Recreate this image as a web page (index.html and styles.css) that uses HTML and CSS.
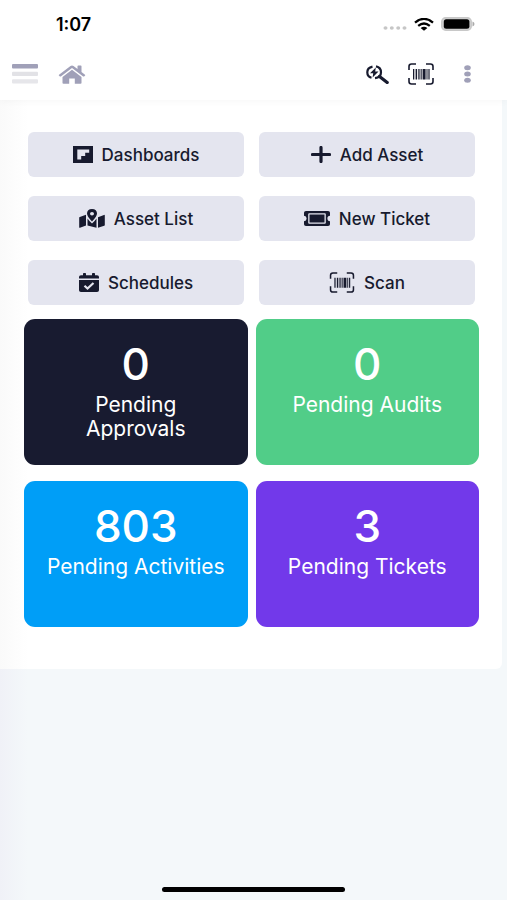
FILE: index.html
```html
<!DOCTYPE html>
<html lang="en">
<head>
<meta charset="utf-8">
<meta name="viewport" content="width=device-width, initial-scale=1">
<title>Home</title>
<link rel="stylesheet" href="styles.css">
</head>
<body>
<svg class="sprite" aria-hidden="true">
  <symbol id="barcode" viewBox="0 0 26 22">
    <path d="M1 7V3.500Q1 1 3.500 1H8M18 1h4.500Q25 1 25 3.500V7M25 15v3.500Q25 21 22.500 21H18M8 21H3.500Q1 21 1 18.500V15" fill="none" stroke="currentColor" stroke-width="1.600"/>
    <path d="M5 6h1.300v10.500H5zM7.600 6h1.500v10.500H7.600zM10.300 6h1.300v10.500h-1.300zM12.600 6h1.100v10.500h-1.100zM14.600 6h3v10.500h-3zM18.500 6h1v10.500h-1zM20.400 6h1.200v10.500h-1.200z" fill="currentColor"/>
  </symbol>
</svg>
<div class="screen">
  <header class="header">
    <div class="status">
      <span class="time">1:07</span>
      <div class="signals">
        <svg width="24" height="4" viewBox="0 0 24 4" class="dots" aria-hidden="true"><g fill="#c6c6c6"><ellipse cx="2.500" cy="2" rx="2" ry="1.700"/><ellipse cx="8.800" cy="2" rx="2" ry="1.700"/><ellipse cx="15.200" cy="2" rx="2" ry="1.700"/><ellipse cx="21.500" cy="2" rx="2" ry="1.700"/></g></svg>
        <svg width="20" height="13" viewBox="0 0 20 13" aria-hidden="true"><path d="M1 4.600Q10-2.800 19 4.600M4.200 7.800q5.800-4.600 11.600 0" fill="none" stroke="#000" stroke-width="2.300"/><path d="M6.600 9.900Q10 7.400 13.400 9.900L10 12.700z"/></svg>
        <svg width="34" height="14" viewBox="0 0 34 14" aria-hidden="true"><rect x=".7" y=".7" width="29.600" height="12.600" rx="4" fill="#d0d0d0" stroke="#c8c8c8" stroke-width="1.400"/><rect x="2.800" y="2.300" width="25.600" height="9.400" rx="2.500"/><path d="M31.500 4.500q2 .8 2 2.500t-2 2.500z" fill="#aaa"/></svg>
      </div>
    </div>
    <nav class="toolbar" aria-label="Main">
      <button class="tool" type="button" aria-label="Menu"><svg width="26" height="20" viewBox="0 0 26 20"><rect width="26" height="4.400" rx="1" fill="#a0a0b8"/><rect y="7.800" width="26" height="4.200" rx="1" fill="#e2e2e6"/><rect y="15.200" width="26" height="4.400" rx="1" fill="#e6e6ea"/></svg></button>
      <a class="tool home" href="#" aria-label="Home"><svg width="28" height="19" viewBox="0 0 28 19"><path d="M14 4.800L23.500 12v6q0 .8-1 .8h-5.700v-5.300h-5.600v5.300H5.500q-1 0-1-.8v-6zM1 9.700L12.500 1.100q1.500-1 3 0l4 3V1.200q0-.7.8-.7h2.400q.8 0 .8.7v5.700L27 9.700q.5.400.1.800l-1 .9q-.4.400-.9 0L14 3.100 2.800 11.400q-.5.400-.9 0l-1-.9Q.500 10.100 1 9.700z" fill="#a0a0b8"/></svg></a>
      <span class="spacer"></span>
      <button class="tool" type="button" aria-label="Quick search"><svg width="23" height="19" viewBox="0 0 23 19"><path d="M6.500 1.600Q1.300 2.700 1.300 7.300q0 4.500 4.200 5.500M10 1.300Q15 2.300 15 7.300q0 5.200-6 5.900" fill="none" stroke="#171a2e" stroke-width="2.200"/><path d="M13.500 11.500l7.700 6" stroke="#171a2e" stroke-width="3.200" stroke-linecap="round"/><path d="M9.800 2.500L4 8.200h3.200L6.600 12.500 12.500 6.500H9.200z" fill="#171a2e"/></svg></button>
      <button class="tool scan" type="button" aria-label="Scan barcode"><svg width="26" height="22"><use href="#barcode"/></svg></button>
      <button class="tool more" type="button" aria-label="More"><svg width="7" height="18" viewBox="0 0 7 18"><g fill="#a0a0b8"><ellipse cx="3.500" cy="2.700" rx="3.300" ry="2.500"/><ellipse cx="3.500" cy="9" rx="3.300" ry="2.500"/><ellipse cx="3.500" cy="15.300" rx="3.300" ry="2.500"/></g></svg></button>
    </nav>
  </header>
  <main class="panel">
    <div class="actions">
      <button class="action" type="button"><svg width="20" height="17" viewBox="0 0 20 17"><path fill="currentColor" fill-rule="evenodd" d="M0 0h20v17H0zM4.300 3.500v10H8.200V10h4V6.800h4V3.500z"/></svg>Dashboards</button>
      <button class="action" type="button"><svg width="20" height="17" viewBox="0 0 20 17"><path d="M10 1.500v14M1.500 8.500h17" stroke="currentColor" stroke-width="3.200" stroke-linecap="round"/></svg>Add Asset</button>
      <button class="action" type="button"><svg width="26" height="19" viewBox="0 0 26 19"><g fill="currentColor"><path fill-rule="evenodd" d="M13 0q5 .2 5 4.600Q18 7.500 13 12.500 8 7.500 8 4.600 8 .2 13 0zM13 3a2 1.800 0 1 0 0 3.600A2 1.800 0 1 0 13 3z"/><path d="M.8 8L7 5.800v10.700L1 18.800q-.8.200-.8-.5V8.800Q.200 8.200.800 8zM8.500 9.500q2 3 4.500 5 2.500-2 4.500-5V18.800L8.500 16.500zM19 8.200l6-2.300q.8-.2.800.5v9.500q0 .5-.6.800L19 18.800z"/></g></svg>Asset List</button>
      <button class="action" type="button"><svg width="26" height="15" viewBox="0 0 26 15"><path fill="currentColor" fill-rule="evenodd" d="M2 0h22q2 0 2 1.700v3.100q-2.600.2-2.600 2.700t2.600 2.700v3.100Q26 15 24 15H2q-2 0-2-1.700v-3.100q2.600-.2 2.600-2.700T0 4.800V1.700Q0 0 2 0zM5.200 2.300q-1 0-1 .9v8.600q0 .9 1 .9h15.600q1 0 1-.9V3.200q0-.9-1-.9z"/><rect x="5.500" y="3.500" width="15" height="8" fill="currentColor"/></svg>New Ticket</button>
      <button class="action" type="button"><svg width="20" height="19" viewBox="0 0 20 19"><path fill="currentColor" d="M2 2.300h2V.8Q4 0 4.800 0h1.400Q7 0 7 .8v1.500h6V.8q0-.8.800-.8h1.400q.8 0 .8.800v1.500h2q2 0 2 1.700v1.500H0V4q0-1.700 2-1.700zM0 7h20v10.200Q20 19 18 19H2q-2 0-2-1.800z"/><path d="M5.500 12.700l3 2.800 6-5.500" fill="none" stroke="#e4e5ef" stroke-width="2.200"/></svg>Schedules</button>
      <button class="action" type="button"><svg width="26" height="21"><use href="#barcode"/></svg>Scan</button>
    </div>
    <div class="tiles">
      <a class="tile approvals" href="#"><strong>0</strong><span>Pending Approvals</span></a>
      <a class="tile audits" href="#"><strong>0</strong><span>Pending Audits</span></a>
      <a class="tile activities" href="#"><strong>803</strong><span>Pending Activities</span></a>
      <a class="tile tickets" href="#"><strong>3</strong><span>Pending Tickets</span></a>
    </div>
  </main>
  <footer class="footer"><div class="indicator"></div></footer>
</div>
</body>
</html>
```
FILE: styles.css
```css
* { box-sizing: border-box; }

body {
  margin: 0;
  background: #f4f8fa;
  color: #171a2e;
  font-family: Inter, "Open Sans", sans-serif;
}

button {
  padding: 0;
  border: 0;
  background: none;
  color: inherit;
  font: inherit;
  cursor: pointer;
}

a { color: inherit; text-decoration: none; }
svg { display: block; flex: none; }
.sprite { position: absolute; width: 0; height: 0; }

.screen {
  display: flex;
  flex-direction: column;
  min-height: 100vh;
  background: linear-gradient(90deg, #f0f1f7, #f4f8fa 28px);
}

.header { background: #fff; box-shadow: 0 1px 8px #0000000a; z-index: 1; }

.status {
  display: flex;
  align-items: center;
  justify-content: space-between;
  height: 48px;
  padding: 0 32px 0 56px;
}

.time { color: #000; font-size: 18px; font-weight: 600; }
.signals { display: flex; align-items: center; gap: 7px; }
.dots { margin-top: 8px; }

.toolbar {
  display: flex;
  align-items: center;
  height: 52px;
  padding: 0 36px 0 12px;
}

.tool { display: flex; }
.home { margin-left: 20px; }
.spacer { flex: 1; }
.scan { margin-left: 19px; }
.more { margin-left: 30px; }

.panel {
  margin-right: 5px;
  padding: 32px 23px 42px 24px;
  border-radius: 0 0 6px 0;
  background: linear-gradient(90deg, #fafafa, #fff 28px);
}

.actions {
  display: grid;
  grid-template-columns: 1fr 1fr;
  gap: 19px 15px;
  padding: 0 4px;
  margin-bottom: 14px;
}

.action {
  display: flex;
  align-items: center;
  justify-content: center;
  gap: 9px;
  height: 45px;
  border-radius: 6px;
  background: #e4e5ef;
  font-size: 17px;
  font-weight: 500;
  line-height: 20px;
}

.tiles {
  display: grid;
  grid-template-columns: 1fr 1fr;
  gap: 16px 8px;
}

.tile {
  display: flex;
  flex-direction: column;
  align-items: center;
  min-height: 146px;
  padding: 21px 16px 0;
  border-radius: 11px;
  color: #fff;
  font-size: 21px;
  line-height: 24px;
  text-align: center;
}

.tile strong {
  margin-bottom: 5px;
  font-size: 44px;
  font-weight: 500;
  line-height: 48px;
}

.approvals { background: #181b30; }
.approvals span { max-width: 120px; }
.audits { background: #51cd88; }
.activities { background: #009ef7; }
.tickets { background: #7239ea; }

.footer {
  display: flex;
  justify-content: center;
  margin-top: auto;
  padding-bottom: 8px;
}

.indicator {
  width: 36%;
  height: 5px;
  border-radius: 3px;
  background: #000;
}
```
